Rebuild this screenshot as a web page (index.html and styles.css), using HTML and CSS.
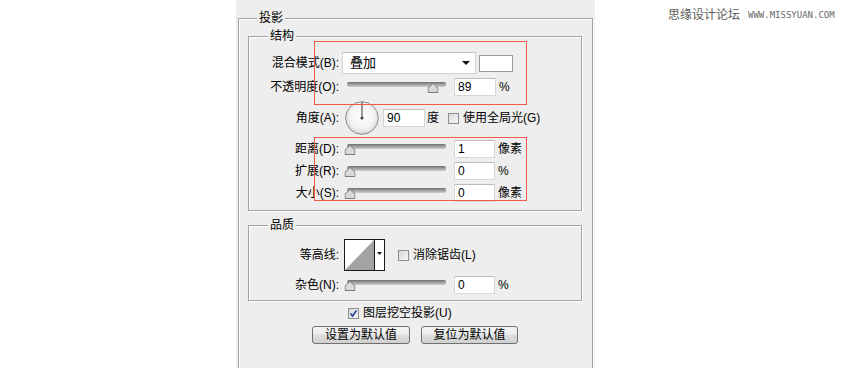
FILE: index.html
```html
<!DOCTYPE html>
<html lang="zh">
<head>
<meta charset="utf-8">
<title>投影</title>
<link rel="stylesheet" href="styles.css">
</head>
<body>
<div class="stage">
  <div class="panel">
    <fieldset class="outer">
      <legend>投影</legend>
      <fieldset class="group struct">
        <legend>结构</legend>
        <div class="row r1">
          <div class="lbl">混合模式(B):</div>
          <div class="select"><span>叠加</span><i class="arrow"></i></div>
          <div class="swatch"></div>
        </div>
        <div class="row r2">
          <div class="lbl">不透明度(O):</div>
          <div class="slider"><div class="track"></div><div class="rail"><span class="thumb" style="left:89%"><svg width="11" height="10" viewBox="0 0 11 10"><polygon points="0.5,9.5 0.5,5 5.5,0.5 10.5,5 10.5,9.5" fill="#d9d9d9" stroke="#7c7c7c"/></svg></span></div></div>
          <div class="num">89</div>
          <div class="unit">%</div>
        </div>
        <div class="row r3">
          <div class="lbl">角度(A):</div>
          <svg class="dial" width="34" height="34" viewBox="0 0 34 34">
            <defs><radialGradient id="dg" cx="50%" cy="45%" r="55%"><stop offset="0" stop-color="#ffffff"/><stop offset="0.7" stop-color="#f2f2f2"/><stop offset="1" stop-color="#d8d8d8"/></radialGradient></defs>
            <circle cx="17" cy="17" r="16.3" fill="url(#dg)" stroke="#8c8c8c" stroke-width="1"/>
            <line x1="17" y1="1" x2="17" y2="17" stroke="#555" stroke-width="1.2"/>
            <circle cx="17" cy="17" r="1.6" fill="#444"/>
          </svg>
          <div class="num angle">90</div>
          <div class="unit deg">度</div>
          <div class="cb global"></div>
          <div class="cbtext">使用全局光(G)</div>
        </div>
        <div class="row r4">
          <div class="lbl">距离(D):</div>
          <div class="slider"><div class="track"></div><div class="rail"><span class="thumb" style="left:0%"><svg width="11" height="10" viewBox="0 0 11 10"><polygon points="0.5,9.5 0.5,5 5.5,0.5 10.5,5 10.5,9.5" fill="#d9d9d9" stroke="#7c7c7c"/></svg></span></div></div>
          <div class="num short">1</div>
          <div class="unit">像素</div>
        </div>
        <div class="row r5">
          <div class="lbl">扩展(R):</div>
          <div class="slider"><div class="track"></div><div class="rail"><span class="thumb" style="left:0%"><svg width="11" height="10" viewBox="0 0 11 10"><polygon points="0.5,9.5 0.5,5 5.5,0.5 10.5,5 10.5,9.5" fill="#d9d9d9" stroke="#7c7c7c"/></svg></span></div></div>
          <div class="num short">0</div>
          <div class="unit">%</div>
        </div>
        <div class="row r6">
          <div class="lbl">大小(S):</div>
          <div class="slider"><div class="track"></div><div class="rail"><span class="thumb" style="left:0%"><svg width="11" height="10" viewBox="0 0 11 10"><polygon points="0.5,9.5 0.5,5 5.5,0.5 10.5,5 10.5,9.5" fill="#d9d9d9" stroke="#7c7c7c"/></svg></span></div></div>
          <div class="num short">0</div>
          <div class="unit">像素</div>
        </div>
      </fieldset>
      <fieldset class="group quality">
        <legend>品质</legend>
        <div class="row q1">
          <div class="lbl">等高线:</div>
          <svg class="contour" width="41" height="32" viewBox="0 0 41 32">
            <rect x="0.5" y="0.5" width="40" height="31" fill="#fff" stroke="#1a1a1a"/>
            <polygon points="1,31 30,1 30,31" fill="#a3a3a3"/>
            <line x1="30.5" y1="1" x2="30.5" y2="31" stroke="#1a1a1a"/>
            <polygon points="33,13 38,13 35.5,16" fill="#111"/>
          </svg>
          <div class="cb anti"></div>
          <div class="cbtext">消除锯齿(L)</div>
        </div>
        <div class="row q2">
          <div class="lbl">杂色(N):</div>
          <div class="slider"><div class="track"></div><div class="rail"><span class="thumb" style="left:0%"><svg width="11" height="10" viewBox="0 0 11 10"><polygon points="0.5,9.5 0.5,5 5.5,0.5 10.5,5 10.5,9.5" fill="#d9d9d9" stroke="#7c7c7c"/></svg></span></div></div>
          <div class="num short">0</div>
          <div class="unit">%</div>
        </div>
      </fieldset>
      <div class="row knock">
        <div class="cb checked"><svg width="9" height="9" viewBox="0 0 9 9"><path d="M1.5 4.5 L3.5 7 L7.5 1.5" fill="none" stroke="#2b4f9e" stroke-width="1.8"/></svg></div>
        <div class="cbtext">图层挖空投影(U)</div>
      </div>
      <div class="buttons">
        <div class="btn b1">设置为默认值</div>
        <div class="btn b2">复位为默认值</div>
      </div>
    </fieldset>
  </div>
</div>
<div class="mark box1"></div>
<div class="mark box2"></div>
<div class="wm"><span class="wm-cn">思缘设计论坛</span><span class="wm-url">WWW.MISSYUAN.COM</span></div>
</body>
</html>
```

FILE: styles.css
```css
* { box-sizing: border-box; }
body {
  margin: 0;
  width: 844px;
  height: 385px;
  overflow: hidden;
  position: relative;
  background: #fff;
  font-family: "Liberation Sans", "Noto Sans CJK SC", sans-serif;
  font-size: 12px;
  color: #000;
}
.stage { display: flex; }
.panel {
  margin-left: 236px;
  width: 359px;
  height: 368px;
  background: #eeeeee;
  padding: 10px 0 0 2px;
  overflow: hidden;
}
fieldset {
  margin: 0;
  padding: 0;
  min-width: 0;
  border: 1px solid #a2a2a2;
  box-shadow: inset 1px 1px 0 #fff, 1px 1px 0 #fff;
}
legend {
  font-size: 12px;
  line-height: 16px;
  padding: 0 2px;
  background: #eeeeee;
}
.outer {
  width: 355px;
  height: 400px;
  padding: 0 10px 0 9px;
}
.outer > legend { margin-left: 9px; }
.group > legend { margin-left: 19px; }
.struct { margin-top: 2px; padding-bottom: 8px; }
.quality { margin-top: 6px; padding-bottom: 6px; }

.row { display: flex; align-items: center; }
.lbl {
  width: 90px;
  flex: none;
  text-align: right;
  white-space: nowrap;
  line-height: 14px;
}
.r1 { margin-top: 8px; height: 22px; }
.r2 { margin-top: 4px; height: 18px; }
.r3 { margin-top: 5px; height: 34px; }
.r4 { margin-top: 5px; height: 18px; }
.r5, .r6 { margin-top: 4px; height: 18px; }
.q1 { margin-top: 6px; height: 32px; }
.q2 { margin-top: 5px; height: 18px; }

.select {
  width: 134px;
  height: 22px;
  margin-left: 3px;
  background: #fff;
  border: 1px solid #d2d2d2;
  border-top-color: #c2c2c2;
  display: flex;
  align-items: center;
  padding: 0 5px 0 7px;
  font-size: 13px;
  line-height: 16px;
}
.arrow {
  margin-left: auto;
  width: 0;
  height: 0;
  border-left: 4px solid transparent;
  border-right: 4px solid transparent;
  border-top: 4px solid #111;
}
.swatch {
  width: 34px;
  height: 17px;
  margin-left: 3px;
  background: #fff;
  border: 1px solid #9c9c9c;
}

.slider {
  position: relative;
  width: 99px;
  height: 11px;
  margin-left: 8px;
  flex: none;
}
.track {
  height: 5px;
  border-radius: 2px;
  background: linear-gradient(#6e6e6e, #9d9d9d 45%, #cfcfcf);
}
.rail {
  position: absolute;
  left: 3px;
  right: 3px;
  top: 1px;
  height: 10px;
}
.thumb {
  position: absolute;
  top: 0;
  width: 11px;
  height: 10px;
  transform: translateX(-50%);
}
.thumb svg { display: block; }

.num {
  width: 42px;
  height: 18px;
  margin-left: 8px;
  background: #fff;
  border: 1px solid #d6d6d6;
  border-top-color: #bdbdbd;
  padding-left: 3px;
  line-height: 16px;
  font-size: 12px;
  flex: none;
}
.num.short { width: 41px; }
.num.angle { margin-left: 4px; }
.unit { margin-left: 3px; line-height: 14px; }
.unit.deg { margin-left: 2px; }

.dial { margin-left: 6px; flex: none; display: block; }

.cb {
  width: 11px;
  height: 11px;
  flex: none;
  border: 1px solid #8e8e8e;
  background: linear-gradient(135deg, #d8d8d8, #f7f7f7);
  display: flex;
  align-items: center;
  justify-content: center;
}
.cb svg { display: block; }
.cb.global { margin-left: 9px; }
.cb.anti { margin-left: 13px; }
.cbtext { margin-left: 4px; line-height: 14px; white-space: nowrap; }

.contour { margin-left: 5px; flex: none; display: block; }

.knock { margin-top: 5px; height: 14px; padding-left: 100px; }

.buttons {
  margin-top: 6px;
  display: flex;
  justify-content: center;
  gap: 11px;
}
.btn {
  height: 18px;
  border: 1px solid #707070;
  border-radius: 3px;
  background: linear-gradient(#f4f4f4, #ececec 45%, #dedede 50%, #d0d0d0);
  display: flex;
  align-items: center;
  justify-content: center;
  line-height: 14px;
  font-size: 12px;
}
.b1 { width: 98px; }
.b2 { width: 97px; }

.mark {
  position: absolute;
  left: 314px;
  width: 213px;
  height: 64px;
  border: 1px solid #ee5b47;
}
.box1 { top: 41px; }
.box2 { top: 137px; }

.wm {
  position: absolute;
  left: 668px;
  top: 8px;
  display: flex;
  align-items: center;
  gap: 8px;
}
.wm-cn { font-size: 12px; line-height: 14px; color: #5c5c5c; }
.wm-url {
  font-family: "DejaVu Sans Mono", monospace;
  font-size: 9px;
  line-height: 10px;
  color: #6a6a6a;
}
```
